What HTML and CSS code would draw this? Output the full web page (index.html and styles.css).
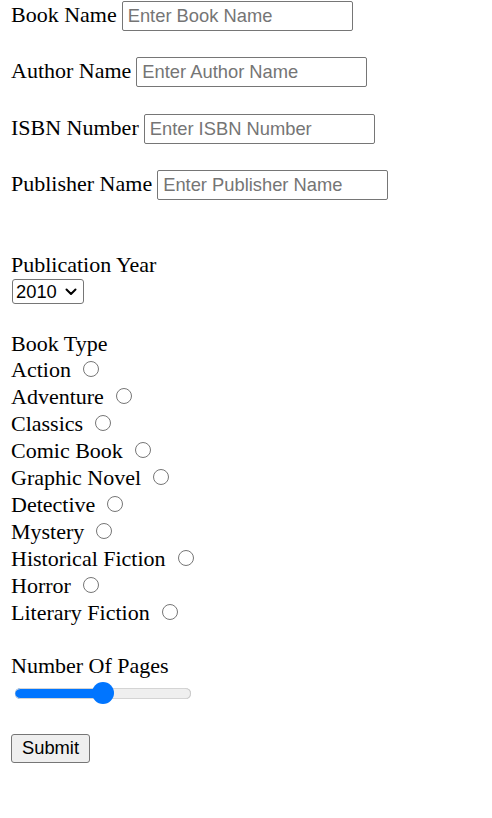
FILE: index.html
```html
<!DOCTYPE html>
<html lang="en">
<head>
<meta charset="utf-8">
<title>Book Form</title>
<link rel="stylesheet" href="styles.css">
</head>
<body>
<form class="book-form">
  <div class="field"><label for="bname">Book Name</label><input id="bname" class="text-input" type="text" placeholder="Enter Book Name"></div>
  <div class="field"><label for="aname">Author Name</label><input id="aname" class="text-input" type="text" placeholder="Enter Author Name"></div>
  <div class="field"><label for="isbn">ISBN Number</label><input id="isbn" class="text-input" type="text" placeholder="Enter ISBN Number"></div>
  <div class="field"><label for="pname">Publisher Name</label><input id="pname" class="text-input" type="text" placeholder="Enter Publisher Name"></div>

  <div class="group year">
    <label class="group-label" for="year">Publication Year</label>
    <div class="select-wrap">
      <select id="year" class="year-select"><option>2010</option><option>2011</option><option>2012</option></select>
      <svg class="chev" width="12" height="8" viewBox="0 0 12 8"><polyline points="1.5,1.5 6,6 10.5,1.5" fill="none" stroke="#000" stroke-width="2" stroke-linecap="round" stroke-linejoin="round"/></svg>
    </div>
  </div>

  <div class="group type">
    <div class="group-label">Book Type</div>
    <div class="option"><label for="t1">Action</label><input id="t1" class="radio" type="radio" name="type"></div>
    <div class="option"><label for="t2">Adventure</label><input id="t2" class="radio" type="radio" name="type"></div>
    <div class="option"><label for="t3">Classics</label><input id="t3" class="radio" type="radio" name="type"></div>
    <div class="option"><label for="t4">Comic Book</label><input id="t4" class="radio" type="radio" name="type"></div>
    <div class="option"><label for="t5">Graphic Novel</label><input id="t5" class="radio" type="radio" name="type"></div>
    <div class="option"><label for="t6">Detective</label><input id="t6" class="radio" type="radio" name="type"></div>
    <div class="option"><label for="t7">Mystery</label><input id="t7" class="radio" type="radio" name="type"></div>
    <div class="option"><label for="t8">Historical Fiction</label><input id="t8" class="radio" type="radio" name="type"></div>
    <div class="option"><label for="t9">Horror</label><input id="t9" class="radio" type="radio" name="type"></div>
    <div class="option"><label for="t10">Literary Fiction</label><input id="t10" class="radio" type="radio" name="type"></div>
  </div>

  <div class="group pages">
    <label class="group-label" for="pages">Number Of Pages</label>
    <input id="pages" class="range" type="range" min="0" max="100" value="50">
  </div>

  <button class="submit" type="submit">Submit</button>
</form>
</body>
</html>
```
FILE: styles.css
```css
html, body {
  background: #fff;
}
body {
  margin: 0;
  font-family: "Liberation Serif", "Times New Roman", serif;
  font-size: 22px;
  color: #000;
}
.book-form {
  padding: 1px 11px 0;
}
.field {
  display: flex;
  align-items: baseline;
  gap: 5px;
  line-height: 25px;
  margin-bottom: 26.3px;
}
.text-input {
  box-sizing: border-box;
  width: 231px;
  height: 30px;
  margin: 0;
  padding: 0 3px 0 5px;
  border: 1px solid #767676;
  border-radius: 2px;
  background: #fff;
  color: #000;
  font-family: "Liberation Sans", Arial, sans-serif;
  font-size: 18.33px;
}
.text-input::placeholder {
  color: #757575;
}
.group-label {
  display: block;
  line-height: 25px;
}
.year {
  margin-top: 52.3px;
  display: flex;
  flex-direction: column;
  align-items: flex-start;
}
.select-wrap {
  position: relative;
  margin-top: 2px;
  margin-left: 1px;
}
.year-select {
  -webkit-appearance: none;
  appearance: none;
  box-sizing: border-box;
  display: block;
  width: 72px;
  height: 25px;
  margin: 0;
  padding: 0 0 0 3px;
  border: 1px solid #767676;
  border-radius: 3px;
  background: #fff;
  color: #000;
  font-family: "Liberation Sans", Arial, sans-serif;
  font-size: 18.33px;
}
.chev {
  position: absolute;
  left: 53px;
  top: 9px;
  pointer-events: none;
}
.type {
  margin-top: 26.5px;
}
.option {
  display: flex;
  align-items: center;
  height: 27px;
  line-height: 27px;
}
.radio {
  -webkit-appearance: none;
  appearance: none;
  box-sizing: border-box;
  width: 16px;
  height: 16px;
  margin: 0 0 0 12px;
  border: 1px solid #767676;
  border-radius: 50%;
  background: #fff;
}
.pages {
  margin-top: 27px;
}
.range {
  -webkit-appearance: none;
  appearance: none;
  display: block;
  width: 176px;
  height: 22px;
  margin: 4.5px 0 0 4px;
  padding: 0;
  background: transparent;
}
.range::-webkit-slider-runnable-track {
  height: 11px;
  border-radius: 6px;
  background: linear-gradient(to right, #0075ff 0, #0075ff 50%, #efefef 50%, #efefef 100%);
  box-shadow: inset -1px 0 0 #c8c8c8, inset 0 1px 0 #d4d4d4, inset 0 -1px 0 #d4d4d4;
}
.range::-webkit-slider-thumb {
  -webkit-appearance: none;
  appearance: none;
  width: 22px;
  height: 22px;
  margin-top: -5.5px;
  border: none;
  border-radius: 50%;
  background: #0075ff;
}
.submit {
  display: block;
  box-sizing: border-box;
  width: 79px;
  height: 29px;
  margin-top: 29.5px;
  padding: 0;
  border: 1px solid #767676;
  border-radius: 3px;
  background: #efefef;
  color: #000;
  font-family: "Liberation Sans", Arial, sans-serif;
  font-size: 18.33px;
}
```
